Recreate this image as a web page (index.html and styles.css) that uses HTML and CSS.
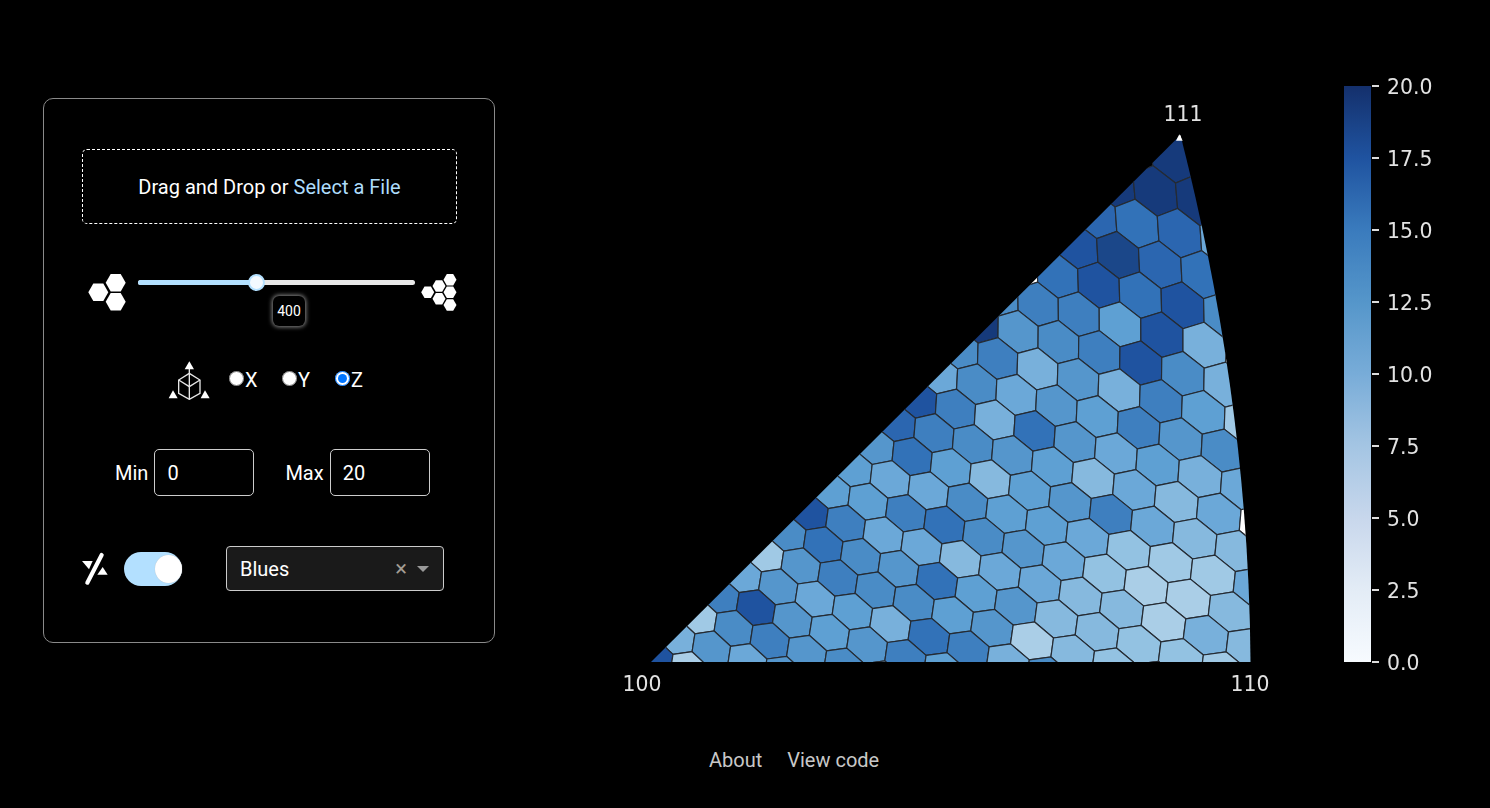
FILE: index.html
```html
<!DOCTYPE html>
<html lang="en">
<head>
<meta charset="utf-8">
<title>IPF hex map</title>
<link rel="stylesheet" href="styles.css">
</head>
<body>
<main class="page">
  <section class="panel">
    <div class="drop">Drag and Drop or&nbsp;<a class="link" href="#">Select a File</a></div>

    <div class="slider-row">
      <svg class="hex-big" width="38" height="38" viewBox="88 274 38 38"><g fill="#fff"><polygon points="88.3,292.3 93.3,283.6 103.3,283.6 108.3,292.3 103.3,301 93.3,301"/><polygon points="105.7,282.7 110.7,274 120.7,274 125.7,282.7 120.7,291.4 110.7,291.4"/><polygon points="105.7,301.7 110.7,293 120.7,293 125.7,301.7 120.7,310.4 110.7,310.4"/></g></svg>
      <div class="slider">
        <div class="track"><div class="track-fill"></div></div>
        <div class="thumb"></div>
        <div class="tip">400</div>
      </div>
      <svg class="hex-small" width="38" height="38" viewBox="421 274 38 38"><g fill="#fff"><polygon points="421.2,292.3 424.5,286.6 430.9,286.6 434.2,292.3 430.9,298 424.5,298"/><polygon points="432.5,286 435.8,280.3 442.2,280.3 445.5,286 442.2,291.7 435.8,291.7"/><polygon points="432.5,298.7 435.8,293 442.2,293 445.5,298.7 442.2,304.4 435.8,304.4"/><polygon points="443.5,279.7 446.8,274 453.2,274 456.5,279.7 453.2,285.4 446.8,285.4"/><polygon points="443.5,292.3 446.8,286.6 453.2,286.6 456.5,292.3 453.2,298 446.8,298"/><polygon points="443.5,305 446.8,299.3 453.2,299.3 456.5,305 453.2,310.7 446.8,310.7"/></g></svg>
    </div>

    <div class="axis-row">
      <svg class="cube" width="44" height="40" viewBox="24 12 132 120"><g fill="none" stroke="#e6e6e6" stroke-width="4"><polygon points="88,52 120,72 120,112 88,130 56,112 56,72"/><polyline points="56,72 88,92 120,72"/><line x1="88" y1="92" x2="88" y2="130"/><line x1="88" y1="38" x2="88" y2="92"/></g><g fill="#fff"><polygon points="74,40 88,16 102,40"/><polygon points="26,127 39,103 53,127"/><polygon points="122,127 135,103 149,127"/></g></svg>
      <label class="axis"><input class="radio" type="radio" name="axis">X</label>
      <label class="axis"><input class="radio" type="radio" name="axis">Y</label>
      <label class="axis"><input class="radio" type="radio" name="axis" checked>Z</label>
    </div>

    <div class="range-row">
      <label class="range-label" for="min">Min</label>
      <input class="num" id="min" type="text" value="0">
      <label class="range-label range-max" for="max">Max</label>
      <input class="num" id="max" type="text" value="20">
    </div>

    <div class="map-row">
      <svg class="flip" width="26" height="34" viewBox="37 25 78 100"><line x1="96" y1="33" x2="53" y2="116" stroke="#fff" stroke-width="12.5" stroke-linecap="round"/><polygon points="37,51 69,51 58,76" fill="#fff"/><polygon points="83,92 114,92 99,69" fill="#fff"/></svg>
      <div class="toggle"><div class="knob"></div></div>
      <div class="select"><span class="select-value">Blues</span><span class="clear">×</span><span class="caret"></span></div>
    </div>
  </section>

  <svg class="figure" width="960" height="650" viewBox="530 50 960 650">
    <defs>
      <clipPath id="tri"><path d="M651,662 L1180.5,135 Q1249,405 1250.5,662 Z"/></clipPath>
      <linearGradient id="blues" x1="0" y1="0" x2="0" y2="1">
        <stop offset="0" stop-color="#14306c"/><stop offset=".125" stop-color="#1f53a0"/><stop offset=".25" stop-color="#3a7bbd"/><stop offset=".375" stop-color="#5596ca"/><stop offset=".5" stop-color="#78acd8"/><stop offset=".625" stop-color="#a4c5e3"/><stop offset=".75" stop-color="#c8d7ec"/><stop offset=".875" stop-color="#e3ecf6"/><stop offset="1" stop-color="#f7fbff"/>
      </linearGradient>
    </defs>
    <g id="hexes" class="hexes" clip-path="url(#tri)"></g>
    <polygon class="apex" points="1176,140.7 1179.3,134.3 1182.7,140.7"/>
    <text class="fig-label" x="1183" y="121" text-anchor="middle">111</text>
    <text class="fig-label" x="642" y="691" text-anchor="middle">100</text>
    <text class="fig-label" x="1250" y="691" text-anchor="middle">110</text>
    <rect x="1344" y="86" width="27" height="576" fill="url(#blues)"/>
    <g class="ticks">
      <rect x="1372" y="85" width="7" height="2"/><rect x="1372" y="157" width="7" height="2"/><rect x="1372" y="229" width="7" height="2"/><rect x="1372" y="301" width="7" height="2"/><rect x="1372" y="373" width="7" height="2"/><rect x="1372" y="445" width="7" height="2"/><rect x="1372" y="517" width="7" height="2"/><rect x="1372" y="589" width="7" height="2"/><rect x="1372" y="661" width="7" height="2"/>
    </g>
    <text class="fig-label" x="1387" y="93.6">20.0</text>
    <text class="fig-label" x="1387" y="165.6">17.5</text>
    <text class="fig-label" x="1387" y="237.6">15.0</text>
    <text class="fig-label" x="1387" y="309.6">12.5</text>
    <text class="fig-label" x="1387" y="381.6">10.0</text>
    <text class="fig-label" x="1387" y="453.6">7.5</text>
    <text class="fig-label" x="1387" y="525.6">5.0</text>
    <text class="fig-label" x="1387" y="597.6">2.5</text>
    <text class="fig-label" x="1387" y="669.6">0.0</text>
  </svg>
</main>
<footer class="foot"><a class="foot-link" href="#">About</a><a class="foot-link" href="#">View code</a></footer>
<script src="script.js"></script>
</body>
</html>
```
FILE: styles.css
```css
html,body{margin:0;padding:0;background:#000}
body{font-family:Roboto,sans-serif;color:#fff;height:808px;overflow:hidden}
.page{display:flex;align-items:flex-start;padding:50px 0 0 43px;height:650px}
.panel{box-sizing:border-box;width:452px;height:545px;margin-top:48px;padding:50px 37px 0 38px;border:1px solid #8a8a8a;border-radius:10px;display:flex;flex-direction:column}
.drop{box-sizing:border-box;height:75px;display:flex;align-items:center;justify-content:center;border:1px dashed #fff;border-radius:5px;font-size:20px}
.link{color:#aeddfc;text-decoration:none}
.slider-row{display:flex;align-items:flex-start;height:58px;margin-top:46px;margin-left:6px}
.hex-big,.hex-small{margin-top:4px;display:block;flex:none}
.hex-small{margin-left:6px}
.slider{position:relative;flex:none;width:277px;margin-left:12px}
.track{margin-top:10px;height:5px;border-radius:3px;background:#e8e8e8;overflow:hidden}
.track-fill{width:43%;height:100%;background:#b3e0ff}
.thumb{position:absolute;left:110px;top:4px;width:17px;height:17px;box-sizing:border-box;border:2px solid #b3e0ff;border-radius:50%;background:#f3f9ff}
.tip{position:absolute;left:135px;top:26px;width:32px;height:30px;box-sizing:border-box;display:flex;align-items:center;justify-content:center;background:#000;border-radius:6px;font-size:14px;box-shadow:0 0 4px 1px rgba(255,255,255,.55)}
.axis-row{display:flex;align-items:center;height:40px;margin-top:32px;margin-left:86px;font-size:20px}
.axis{display:flex;align-items:center;margin-left:17px;width:36px}
.radio{width:15px;height:15px;margin:-4px 1px 0 0}
.cube{display:block}
.range-row{display:flex;align-items:center;height:47px;margin-top:49px;margin-left:33px;font-size:20px}
.range-label{margin-right:6px}
.range-max{margin-left:31px}
.num{box-sizing:border-box;width:100px;height:47px;padding:0 12px;background:#000;color:#fff;border:1px solid #ccc;border-radius:5px;font:20px Roboto,sans-serif}
.map-row{display:flex;align-items:center;height:45px;margin-top:50px}
.flip{display:block}
.toggle{position:relative;width:58px;height:34px;margin-left:16px;border-radius:17px;background:#b3e0ff}
.knob{position:absolute;right:0;top:3px;width:27px;height:28px;border-radius:50%;background:#fff;box-shadow:0 0 1px #bbb}
.select{box-sizing:border-box;display:flex;align-items:center;width:218px;height:45px;margin-left:44px;padding:0 14px 0 13px;background:#1a1a1a;border:1px solid #ccc;border-radius:4px;font-size:20px}
.select-value{flex:1}
.clear{color:#a39d94;font-size:22px;margin-right:10px}
.caret{width:0;height:0;border-left:6px solid transparent;border-right:6px solid transparent;border-top:6px solid #999}
.figure{display:block;margin-left:35px;filter:blur(.35px)}
.hexes polygon{stroke:#252b33;stroke-width:1.2}
.apex{fill:#fff}
.ticks{fill:#dcdcdc}
.fig-label{font:20.4px "DejaVu Sans",sans-serif;fill:#e2e2e2}
.foot{display:flex;gap:25px;padding:48px 0 0 709px;font-size:20px}
.foot-link{color:#c8c8c8;text-decoration:none}
```
FILE: script.js
```js
// Hexagonal bins of the inverse pole figure: the bin grid is bent by the projection.
var CX = [1136.98976, 42.12762, -18.57281, 0.30350, -0.40451, -0.30303, 0.00733, 0.00443];
var CY = [223.92496, 9.42257, 32.02446, 0.08457, 0.23136, -0.66389, 0.01310, -0.00258];
var COLORS = {
  A:'#163a7b', P:'#1b4789', B:'#1f53a0', C:'#2b66b0', D:'#3272b8', E:'#3e7fbf', F:'#4a8cc6',
  G:'#5596cc', H:'#5ea0d3', I:'#6ba8d8', J:'#78b0db', K:'#86b9de', L:'#93c2e2', M:'#a0c9e5', N:'#aacee7',
  W:'#ffffff'
};
// [row v, first column u, one colour letter per bin; W = bin without data]
var ROWS = [
  [-3,0,'W'],[-2,0,'AW'],[-1,-1,'AAA'],[0,-1,'CDCI'],[1,-1,'BPCD'],[2,-2,'WDBDBF'],[3,-2,'FEEHBJW'],
  [4,-2,'AGFEBFJ'],[5,-2,'FEJGJEHM'],[6,-2,'IFIGHEGF'],[7,-2,'BEJDGIHJI'],[8,-2,'CEFGHKIKIW'],
  [9,-2,'GDHKHGEIKK'],[10,-2,'HIIFHHILMMI'],[11,-2,'HHEDFGILNNK'],[12,-2,'BEIIKIIKKNJK'],
  [13,-2,'FDFGDHGKKLLM'],[14,-2,'MGEFFHGNKLW'],[15,-2,'IGIHJDEJFL'],[16,-2,'EBGHGEHJ'],
  [17,-2,'MFEGFNH'],[18,-2,'JGIGG'],[19,-2,'BNW']
];
function at(u, v) {
  var t = [1, u, v, u*u, u*v, v*v, v*v*v, u*v*v], x = 0, y = 0;
  t.forEach(function (a, i) { x += a * CX[i]; y += a * CY[i]; });
  return x.toFixed(1) + ',' + y.toFixed(1);
}
var CORNERS = [[2/3,1/3],[1/3,2/3],[-1/3,1/3],[-2/3,-1/3],[-1/3,-2/3],[1/3,-1/3]];
var layer = document.getElementById('hexes');
function addHex(u, v, color) {
  var hex = document.createElementNS('http://www.w3.org/2000/svg', 'polygon');
  hex.setAttribute('points', CORNERS.map(function (c) { return at(u + c[0], v + c[1]); }).join(' '));
  hex.setAttribute('fill', color);
  layer.appendChild(hex);
}
ROWS.forEach(function (row) {
  row[2].split('').forEach(function (letter, i) { addHex(row[1] + i, row[0], COLORS[letter]); });
});
// Bins that only touch the edge of the sector
[[-3,7],[-3,8],[-3,9],[-3,10],[-3,11],[-3,12],[-3,13],[-3,14],[-3,15],[-3,16],[-3,17],[-3,18],[-3,19],[-3,6],[-3,5],[-3,4]].forEach(function (p) { addHex(p[0], p[1], COLORS.G); });
```
